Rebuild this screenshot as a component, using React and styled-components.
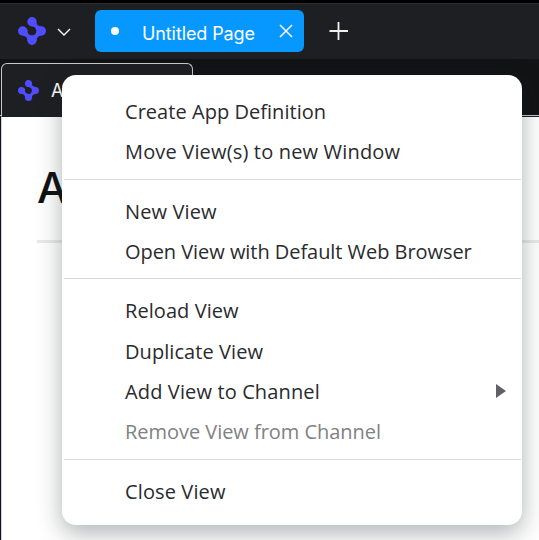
import React from "react";
import styled, { createGlobalStyle } from "styled-components";

const Global = createGlobalStyle`
  * { box-sizing: border-box; }
  body { margin: 0; overflow: hidden; background: #fff; }
`;

const Window = styled.div`
  position: relative;
  display: flex;
  flex-direction: column;
  width: 539px;
  height: 540px;
  overflow: hidden;
  background: #121315;
  font-family: "Open Sans", "Noto Sans", sans-serif;
`;

const TitleBar = styled.header`
  display: flex;
  align-items: center;
  flex: none;
  height: 59px;
  padding: 0 0 0 18px;
  border-top: 3px solid #000;
  background: #1e1f23;
  box-shadow: inset 0 1px #2c2d31;
`;

const Chevron = styled.svg`
  margin: 2px 0 0 11px;
`;

const PageTab = styled.div`
  display: flex;
  align-items: center;
  width: 209px;
  height: 42px;
  margin-left: 24px;
  padding: 0 11px 0 16px;
  border-radius: 6px;
  background: #0698fe;
  color: #fff;
`;

const UnsavedDot = styled.span`
  width: 8px;
  height: 8px;
  border-radius: 50%;
  background: #fff;
`;

const TabTitle = styled.span`
  flex: 1;
  padding: 5px 0 0 23px;
  font-family: Inter, sans-serif;
  font-size: 18px;
  line-height: 22px;
  letter-spacing: -0.1px;
  white-space: nowrap;
`;

const AddIcon = styled.svg`
  margin-left: 25px;
`;

const ViewStrip = styled.div`
  display: flex;
  align-items: flex-end;
  flex: none;
  height: 57px;
  padding-left: 1px;
  border-bottom: 1px solid #c9c9cc;
`;

const ViewTab = styled.div`
  display: flex;
  align-items: center;
  gap: 12px;
  width: 192px;
  height: 54px;
  margin-bottom: -2px;
  padding-left: 16px;
  border: 1px solid #c9c9cc;
  border-bottom: 0;
  border-radius: 6px 6px 0 0;
  background: #1e1f23;
  color: #fff;
  font-family: Inter, sans-serif;
  font-size: 18px;
`;

const Page = styled.main`
  flex: 1;
  margin-left: 1px;
  padding: 44px 0 0 35px;
  border-top: 1px solid #1e1f23;
  border-left: 1px solid #d5cddb;
  background: #fff;
`;

const Heading = styled.h1`
  margin: 0;
  height: 79px;
  font-family: Inter, sans-serif;
  font-size: 43px;
  font-weight: 550;
  line-height: 52px;
  color: #111214;
`;

const Rule = styled.div`
  height: 3px;
  background: #e9e9e9;
`;

const Menu = styled.nav`
  position: absolute;
  left: 62px;
  top: 75px;
  width: 460px;
  height: 450px;
  padding: 17px 1px 0 2px;
  border-radius: 14px;
  background: #fff;
  box-shadow: 0 8px 24px rgba(20, 28, 32, 0.34);
`;

const Group = styled.div`
  & + & {
    margin-top: 7px;
    padding-top: 12px;
    border-top: 1px solid #d9d9da;
  }
  &:nth-child(3) {
    margin-top: 6px;
  }
`;

const Item = styled.div`
  display: flex;
  align-items: center;
  justify-content: space-between;
  height: 40px;
  padding: 0 15px 2px 61px;
  font-size: 20px;
  letter-spacing: ${(p) => p.$spacing || 0}px;
  white-space: nowrap;
  color: ${(p) => (p.$disabled ? "#808284" : "#2a2b2e")};

  ${Group}:nth-child(3) &:first-child {
    margin-bottom: 1px;
  }
`;

const SubmenuArrow = styled.svg`
  margin-bottom: 1px;
`;

const Logo = ({ size }) => (
  <svg width={size} height={size} viewBox="0 0 28 28" fill="#504cff">
    <circle cx="14" cy="4.7" r="4.7" />
    <circle cx="4.7" cy="14" r="4.7" />
    <circle cx="23.3" cy="14" r="4.7" />
    <circle cx="14" cy="23.3" r="4.7" />
    <path d="M18.3 5.5Q19.2 9.2 23 9.4L23.2 18.5Q19 19.2 18.5 23L9.5 23Q9 19 5 18.7L7.5 10.8L9.6 13A4.5 4.5 0 1 0 14.6 9.6L10.5 7.8Z" />
  </svg>
);

const groups = [
  [
    { label: "Create App Definition", spacing: 0.04 },
    { label: "Move View(s) to new Window", spacing: 0.17 },
  ],
  [
    { label: "New View", spacing: 0.12 },
    { label: "Open View with Default Web Browser", spacing: -0.05 },
  ],
  [
    { label: "Reload View", spacing: 0.07 },
    { label: "Duplicate View", spacing: 0.07 },
    { label: "Add View to Channel", submenu: true, spacing: 0.13 },
    { label: "Remove View from Channel", disabled: true, spacing: -0.04 },
  ],
  [{ label: "Close View", spacing: 0.12 }],
];

export default function App() {
  return (
    <Window>
      <Global />
      <TitleBar>
        <Logo size={28} />
        <Chevron width="14" height="8" viewBox="0 0 14 8" fill="none" stroke="#fff" strokeWidth="1.4">
          <path d="M1 1L7 7L13 1" />
        </Chevron>
        <PageTab>
          <UnsavedDot />
          <TabTitle>Untitled Page</TabTitle>
          <svg width="14" height="14" viewBox="0 0 14 14" stroke="#fff" strokeWidth="1.5">
            <path d="M1 1L13 13M13 1L1 13" />
          </svg>
        </PageTab>
        <AddIcon width="20" height="20" viewBox="0 0 20 20" stroke="#f3f3ee" strokeWidth="1.8">
          <path d="M9.5 1V19M0.5 10H19" />
        </AddIcon>
      </TitleBar>
      <ViewStrip>
        <ViewTab>
          <Logo size={21} />
          <span>A</span>
        </ViewTab>
      </ViewStrip>
      <Page>
        <Heading>A</Heading>
        <Rule />
      </Page>
      <Menu>
        {groups.map((items) => (
          <Group key={items[0].label}>
            {items.map((item) => (
              <Item key={item.label} $disabled={item.disabled} $spacing={item.spacing}>
                {item.label}
                {item.submenu && (
                  <SubmenuArrow width="10" height="14" viewBox="0 0 10 14" fill="#606164">
                    <path d="M0 0L10 7L0 14Z" />
                  </SubmenuArrow>
                )}
              </Item>
            ))}
          </Group>
        ))}
      </Menu>
    </Window>
  );
}
